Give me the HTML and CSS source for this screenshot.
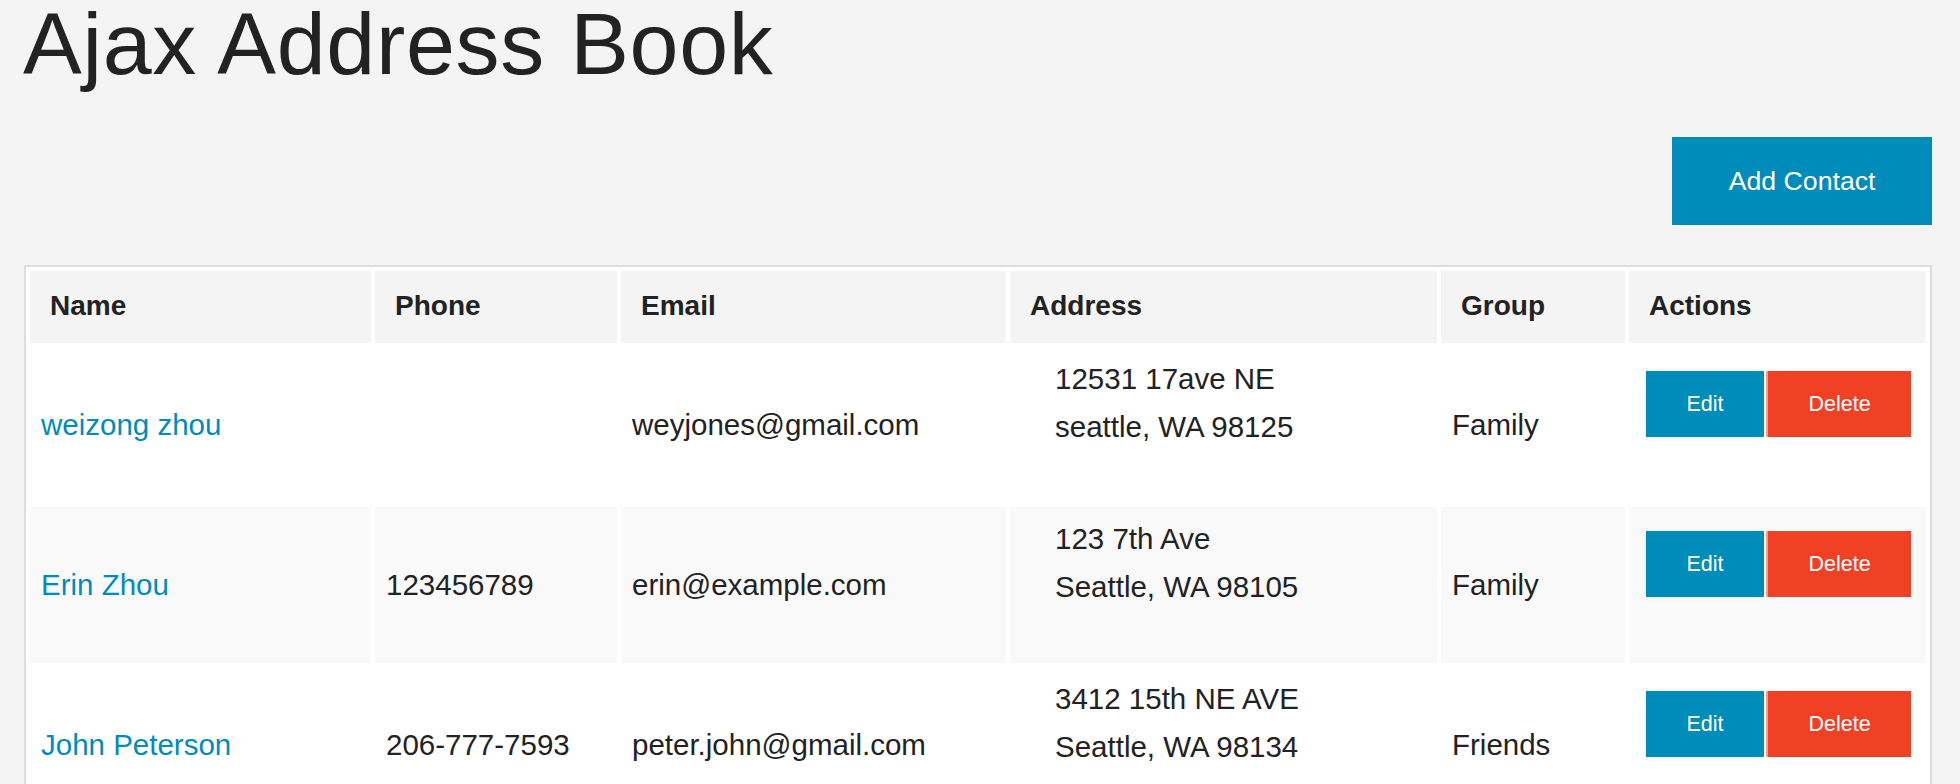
FILE: index.html
```html
<!DOCTYPE html>
<html lang="en">
<head>
<meta charset="utf-8">
<title>Ajax Address Book</title>
<link rel="stylesheet" href="styles.css">
</head>
<body>
<div class="page">
  <h1 class="title">Ajax Address Book</h1>
  <div class="toolbar">
    <button class="btn btn-add">Add Contact</button>
  </div>
  <table class="contacts">
    <colgroup>
      <col class="c-name">
      <col class="c-phone">
      <col class="c-email">
      <col class="c-address">
      <col class="c-group">
      <col class="c-actions">
    </colgroup>
    <thead>
      <tr>
        <th>Name</th>
        <th>Phone</th>
        <th>Email</th>
        <th>Address</th>
        <th>Group</th>
        <th>Actions</th>
      </tr>
    </thead>
    <tbody>
      <tr>
        <td><a class="name-link" href="#">weizong zhou</a></td>
        <td></td>
        <td>weyjones@gmail.com</td>
        <td><address class="addr">12531 17ave NE<br>seattle, WA 98125</address></td>
        <td>Family</td>
        <td><div class="actions"><button class="btn btn-edit">Edit</button><button class="btn btn-delete">Delete</button></div></td>
      </tr>
      <tr>
        <td><a class="name-link" href="#">Erin Zhou</a></td>
        <td>123456789</td>
        <td>erin@example.com</td>
        <td><address class="addr">123 7th Ave<br>Seattle, WA 98105</address></td>
        <td>Family</td>
        <td><div class="actions"><button class="btn btn-edit">Edit</button><button class="btn btn-delete">Delete</button></div></td>
      </tr>
      <tr>
        <td><a class="name-link" href="#">John Peterson</a></td>
        <td>206-777-7593</td>
        <td>peter.john@gmail.com</td>
        <td><address class="addr">3412 15th NE AVE<br>Seattle, WA 98134</address></td>
        <td>Friends</td>
        <td><div class="actions"><button class="btn btn-edit">Edit</button><button class="btn btn-delete">Delete</button></div></td>
      </tr>
    </tbody>
  </table>
</div>
</body>
</html>
```

FILE: styles.css
```css
html {
  overflow: hidden;
}

body {
  margin: 0;
  background: #f4f4f4;
  color: #222222;
  font-family: "Liberation Sans", Arial, Helvetica, sans-serif;
}

.page {
  padding: 0 28px 0 24px;
}

.title {
  margin: 0 0 0 -1px;
  font-size: 88px;
  line-height: 88px;
  letter-spacing: 0.7px;
  font-weight: normal;
  color: #222222;
}

.toolbar {
  display: flex;
  justify-content: flex-end;
  margin-top: 49px;
  margin-bottom: 40px;
}

.btn {
  border: 0;
  margin: 0;
  color: #ffffff;
  font-family: inherit;
  font-weight: normal;
  cursor: pointer;
}

.btn-add {
  background: #008cba;
  font-size: 26.7px;
  line-height: 32px;
  padding: 28px 56.5px;
}

.contacts {
  width: 100%;
  table-layout: fixed;
  border: 2px solid #dddddd;
  border-spacing: 4px;
  background: #ffffff;
}

.c-name { width: 341px; }
.c-phone { width: 242px; }
.c-email { width: 385px; }
.c-address { width: 427px; }
.c-group { width: 184px; }
.c-actions { width: 297px; }

.contacts th {
  background: #f4f4f4;
  text-align: left;
  font-size: 28px;
  font-weight: bold;
  padding: 19px 20px 21px;
  color: #222222;
}

.contacts td {
  font-size: 29.5px;
  padding: 10px 9px 10px 11px;
  vertical-align: middle;
  color: #222222;
}

.contacts tbody tr:nth-child(even) td {
  background: #f9f9f9;
}

.name-link {
  color: #008cba;
  text-decoration: none;
}

.addr {
  font-style: normal;
  line-height: 48px;
  margin: -2px 0 42px 34px;
}

.actions {
  display: flex;
  gap: 2px;
  margin: 0 0 42px 6px;
}

.btn-edit,
.btn-delete {
  font-size: 21.5px;
  line-height: 26px;
  padding: 20px 40.5px;
}

.btn-edit {
  background: #008cba;
}

.btn-delete {
  background: #f04124;
  border-left: 2px solid #f6a091;
}
```
